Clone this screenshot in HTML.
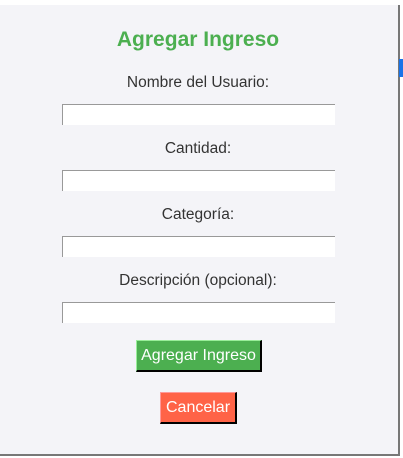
<!DOCTYPE html><html><head><style>
body{margin:0;width:403px;height:458px;background:#fff;font-family:"Liberation Sans",sans-serif;position:relative;overflow:hidden}
.p{position:absolute;left:0;top:5px;width:398px;height:449px;background:#f4f4f8;border-right:2px solid #777;border-bottom:2px solid #777}
.t{position:absolute;left:0;width:396px;text-align:center;color:#4caf50;font-weight:bold;font-size:21px;top:23px}
.l{position:absolute;left:0;width:396px;text-align:center;color:#333;font-size:15.5px}
.i{position:absolute;left:62px;width:272px;height:20px;background:#fff;border-top:1px solid #999;border-left:1px solid #999}
.b{position:absolute;color:#fff;font-size:16px;text-align:center;box-sizing:border-box;border:1px solid;border-width:1px 2px 2px 1px}
</style></head><body>
<div class="p">
<div class="t">Agregar Ingreso</div>
<div class="l" style="top:69px">Nombre del Usuario:</div>
<div class="i" style="top:99px"></div>
<div class="l" style="top:135px">Cantidad:</div>
<div class="i" style="top:165px"></div>
<div class="l" style="top:201px">Categoría:</div>
<div class="i" style="top:231px"></div>
<div class="l" style="top:267px">Descripción (opcional):</div>
<div class="i" style="top:297px"></div>
<div class="b" style="left:136px;top:335px;width:126px;height:32px;line-height:29px;background:#4caf50;border-color:#9e9 #000 #000 #9e9">Agregar Ingreso</div>
<div class="b" style="left:160px;top:387px;width:77px;height:32px;line-height:29px;background:#ff6347;border-color:#f99 #000 #000 #f99">Cancelar</div>
</div>
<div style="position:absolute;left:399px;top:59px;width:4px;height:18px;background:#1a73e8"></div>
</body></html>
